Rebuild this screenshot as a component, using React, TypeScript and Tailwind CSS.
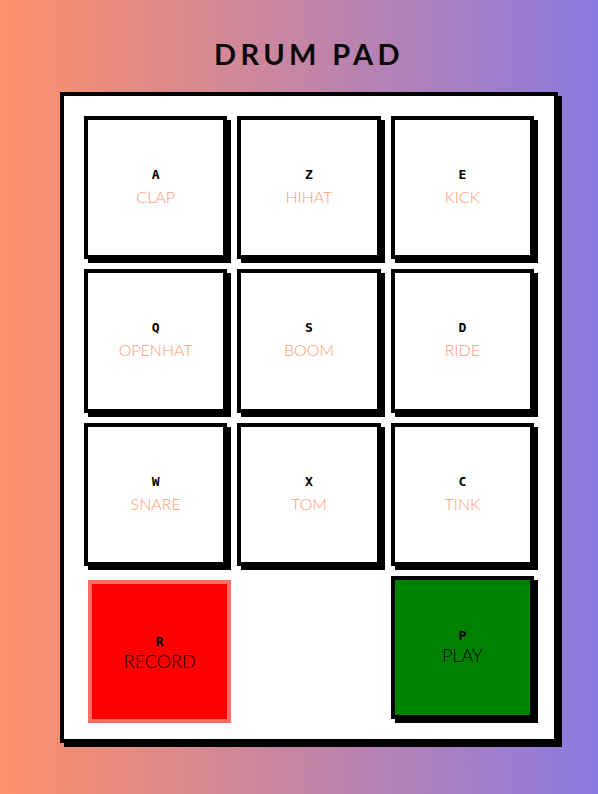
import React from "react";

const pads = [
  { k: "A", l: "CLAP" },
  { k: "Z", l: "HIHAT" },
  { k: "E", l: "KICK" },
  { k: "Q", l: "OPENHAT" },
  { k: "S", l: "BOOM" },
  { k: "D", l: "RIDE" },
  { k: "W", l: "SNARE" },
  { k: "X", l: "TOM" },
  { k: "C", l: "TINK" },
];

export default function App() {
  return (
    <div className="min-h-[794px] w-full bg-[linear-gradient(to_right,#ff9068,#8a7ae0)] flex flex-col items-center pl-[20px]">
      <h1 className="mt-[40px] mb-[24px] text-[29px] leading-[28px] font-bold tracking-[0.15em] text-[#0a0a0a] font-['Lato',sans-serif]">
        DRUM PAD
      </h1>
      <div className="w-[498px] border-4 border-black bg-white shadow-[4px_4px_0_#000] p-[20px]">
        <div className="grid grid-cols-3 gap-x-[10px] gap-y-[10px] auto-rows-[143.25px]">
          {pads.map((p) => (
            <div
              key={p.k}
              className="border-4 border-black bg-white shadow-[4px_4px_0_#000] flex flex-col items-center justify-center"
            >
              <div className="font-['DejaVu_Sans_Mono',monospace] font-bold text-[13px] leading-[16px] text-black">
                {p.k}
              </div>
              <div className="font-['Lato',sans-serif] font-light text-[16px] leading-[22px] mt-[3px] text-[#ff9a72]">
                {p.l}
              </div>
            </div>
          ))}
          <div className="translate-x-[4px] translate-y-[4px] border-4 border-[#ff6e64] bg-[#ff0000] flex flex-col items-center justify-center pt-[4px]">
            <div className="font-['DejaVu_Sans_Mono',monospace] font-bold text-[13px] leading-[16px] text-black">
              R
            </div>
            <div className="font-['Lato',sans-serif] font-light text-[18px] leading-[22px] text-black">
              RECORD
            </div>
          </div>
          <div />
          <div className="border-4 border-black bg-[#008000] shadow-[4px_4px_0_#000] flex flex-col items-center justify-center">
            <div className="font-['DejaVu_Sans_Mono',monospace] font-bold text-[13px] leading-[16px] text-black">
              P
            </div>
            <div className="font-['Lato',sans-serif] font-light text-[18px] leading-[22px] text-black">
              PLAY
            </div>
          </div>
        </div>
      </div>
    </div>
  );
}
